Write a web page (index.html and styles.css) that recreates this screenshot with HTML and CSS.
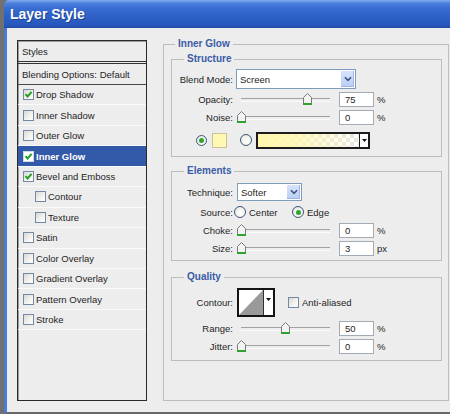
FILE: index.html
```html
<!DOCTYPE html>
<html>
<head>
<meta charset="utf-8">
<title>Layer Style</title>
<link rel="stylesheet" href="styles.css">
</head>
<body>
<div class="window">
  <div class="titlebar">Layer Style</div>
  <div class="client">
    <div class="styles">
      <div class="list-head">Styles</div>
      <div class="list-blend">Blending Options: Default</div>
      <div class="list-row"><span class="cb on"><svg viewBox="0 0 9 9"><polyline points="1.5,4.2 3.6,6.5 7.6,1.8"/></svg></span>Drop Shadow</div>
      <div class="list-row"><span class="cb"></span>Inner Shadow</div>
      <div class="list-row"><span class="cb"></span>Outer Glow</div>
      <div class="list-row selected"><span class="cb on"><svg viewBox="0 0 9 9"><polyline points="1.5,4.2 3.6,6.5 7.6,1.8"/></svg></span>Inner Glow</div>
      <div class="list-row"><span class="cb on"><svg viewBox="0 0 9 9"><polyline points="1.5,4.2 3.6,6.5 7.6,1.8"/></svg></span>Bevel and Emboss</div>
      <div class="list-row sub"><span class="cb"></span>Contour</div>
      <div class="list-row sub"><span class="cb"></span>Texture</div>
      <div class="list-row"><span class="cb"></span>Satin</div>
      <div class="list-row"><span class="cb"></span>Color Overlay</div>
      <div class="list-row"><span class="cb"></span>Gradient Overlay</div>
      <div class="list-row"><span class="cb"></span>Pattern Overlay</div>
      <div class="list-row"><span class="cb"></span>Stroke</div>
    </div>

    <fieldset class="group outer">
      <legend>Inner Glow</legend>

      <fieldset class="group structure">
        <legend>Structure</legend>
        <div class="row r-blend">
          <span class="lbl">Blend Mode:</span>
          <div class="select wide"><span class="select-text">Screen</span><span class="select-btn"><svg viewBox="0 0 9 6"><path d="M1 1 L4.5 4.5 L8 1"/></svg></span></div>
        </div>
        <div class="row r-first">
          <span class="lbl">Opacity:</span>
          <div class="slider"><div class="rail"><span class="thumb" style="left:75%"><svg viewBox="0 0 9 12"><path d="M0.5 4.5 L4.5 0.5 L8.5 4.5 V10.5 H0.5 Z"/><rect x="0" y="10" width="9" height="2"/></svg></span></div></div>
          <span class="num">75</span><span class="unit">%</span>
        </div>
        <div class="row">
          <span class="lbl">Noise:</span>
          <div class="slider"><div class="rail"><span class="thumb" style="left:0%"><svg viewBox="0 0 9 12"><path d="M0.5 4.5 L4.5 0.5 L8.5 4.5 V10.5 H0.5 Z"/><rect x="0" y="10" width="9" height="2"/></svg></span></div></div>
          <span class="num">0</span><span class="unit">%</span>
        </div>
        <div class="row r-color">
          <span class="radio on"></span>
          <span class="swatch"></span>
          <span class="radio r2"></span>
          <div class="gradient"><span class="grad-fill"></span><span class="grad-btn"><svg viewBox="0 0 5 3"><path d="M0 0 H5 L2.5 3 Z"/></svg></span></div>
        </div>
      </fieldset>

      <fieldset class="group elements">
        <legend>Elements</legend>
        <div class="row r-tech">
          <span class="lbl">Technique:</span>
          <div class="select narrow"><span class="select-text">Softer</span><span class="select-btn"><svg viewBox="0 0 9 6"><path d="M1 1 L4.5 4.5 L8 1"/></svg></span></div>
        </div>
        <div class="row r-source">
          <span class="lbl">Source:</span>
          <span class="opt first"><span class="radio"></span>Center</span>
          <span class="opt"><span class="radio on"></span>Edge</span>
        </div>
        <div class="row">
          <span class="lbl">Choke:</span>
          <div class="slider"><div class="rail"><span class="thumb" style="left:0%"><svg viewBox="0 0 9 12"><path d="M0.5 4.5 L4.5 0.5 L8.5 4.5 V10.5 H0.5 Z"/><rect x="0" y="10" width="9" height="2"/></svg></span></div></div>
          <span class="num">0</span><span class="unit">%</span>
        </div>
        <div class="row">
          <span class="lbl">Size:</span>
          <div class="slider"><div class="rail"><span class="thumb" style="left:1%"><svg viewBox="0 0 9 12"><path d="M0.5 4.5 L4.5 0.5 L8.5 4.5 V10.5 H0.5 Z"/><rect x="0" y="10" width="9" height="2"/></svg></span></div></div>
          <span class="num">3</span><span class="unit">px</span>
        </div>
      </fieldset>

      <fieldset class="group quality">
        <legend>Quality</legend>
        <div class="row r-contour">
          <span class="lbl">Contour:</span>
          <div class="contour"><span class="curve"><svg viewBox="0 0 26 25" preserveAspectRatio="none"><path d="M0 25 L26 0 V25 Z"/></svg></span><span class="contour-btn"><svg viewBox="0 0 5 3"><path d="M0 0 H5 L2.5 3 Z"/></svg></span></div>
          <span class="cb aa"></span><span class="aa-text">Anti-aliased</span>
        </div>
        <div class="row r-first">
          <span class="lbl">Range:</span>
          <div class="slider"><div class="rail"><span class="thumb" style="left:50%"><svg viewBox="0 0 9 12"><path d="M0.5 4.5 L4.5 0.5 L8.5 4.5 V10.5 H0.5 Z"/><rect x="0" y="10" width="9" height="2"/></svg></span></div></div>
          <span class="num">50</span><span class="unit">%</span>
        </div>
        <div class="row">
          <span class="lbl">Jitter:</span>
          <div class="slider"><div class="rail"><span class="thumb" style="left:0%"><svg viewBox="0 0 9 12"><path d="M0.5 4.5 L4.5 0.5 L8.5 4.5 V10.5 H0.5 Z"/><rect x="0" y="10" width="9" height="2"/></svg></span></div></div>
          <span class="num">0</span><span class="unit">%</span>
        </div>
      </fieldset>
    </fieldset>
  </div>
</div>
</body>
</html>
```

FILE: styles.css
```css
* { box-sizing: border-box; }
html, body { margin: 0; padding: 0; }
body {
  width: 450px;
  height: 414px;
  overflow: hidden;
  background: #707070;
  font-family: "Liberation Sans", Arial, sans-serif;
  font-size: 9.5px;
  color: #1e1e1e;
}
.window {
  margin-left: 4px;
  height: 414px;
  display: flex;
  flex-direction: column;
}
.titlebar {
  flex: none;
  height: 28px;
  padding-left: 6px;
  display: flex;
  align-items: center;
  color: #fff;
  font-weight: bold;
  font-size: 14px;
  border-radius: 5px 0 0 0;
  text-shadow: 1px 1px 0 #1d438f;
  background: linear-gradient(to bottom, #86aef0 0, #4d82de 3px, #3a6dd2 8px, #2f62c8 55%, #2757bc 90%, #1f4aa6 100%);
}
.client {
  flex: 1;
  display: flex;
  align-items: flex-start;
  background: #ededed;
  border-left: 3px solid #4a7bd6;
  border-bottom: 2px solid #686868;
  padding: 9px 0 0 10px;
}

/* ---------- styles list ---------- */
.styles {
  flex: none;
  width: 130px;
  height: 361px;
  margin-top: 3px;
  border: 1px solid #2a2a2a;
  box-shadow: inset 1px 1px 0 #9c9c9c;
  background: #ededed;
}
.list-head {
  height: 23px;
  padding-left: 4px;
  display: flex;
  align-items: center;
  border-bottom: 3px double #333;
}
.list-blend {
  height: 21px;
  padding-left: 4px;
  display: flex;
  align-items: center;
  border-bottom: 1px solid #4a4a4a;
}
.list-row {
  height: 20.45px;
  padding-left: 5px;
  display: flex;
  align-items: center;
  border-bottom: 1px solid #fafafa;
}
.list-row.sub { padding-left: 17px; }
.list-row.selected {
  background: #3359a9;
  color: #fff;
  font-weight: bold;
}
.cb {
  flex: none;
  width: 11px;
  height: 11px;
  margin-right: 2px;
  border: 1px solid #7389a6;
  background: linear-gradient(135deg, #d9d9d3 0%, #f3f3f0 60%, #fff 100%);
  display: flex;
  align-items: center;
  justify-content: center;
}
.cb svg { width: 9px; height: 9px; }
.cb polyline { fill: none; stroke: #22a022; stroke-width: 2; }
.selected .cb { background: #fff; border-color: #cfd8e8; }

/* ---------- groups ---------- */
fieldset.group {
  margin: 0;
  padding: 0;
  min-width: 0;
  border: 1px solid #bdbdbd;
}
fieldset.group > legend {
  margin-left: 12px;
  padding: 0 3px;
  font-weight: bold;
  font-size: 10px;
  line-height: 14px;
  color: #3a5ba6;
}
fieldset.outer {
  flex: none;
  width: 286px;
  height: 364px;
  margin-left: 16px;
  padding-top: 1px;
}
fieldset.outer > legend { margin-left: 11px; }
fieldset.structure { margin: 0 6px 0 7px; height: 105px; }
fieldset.elements { margin: 7px 6px 0 7px; height: 97px; }
fieldset.quality { margin: 9px 6px 0 7px; height: 91px; }

.row {
  display: flex;
  align-items: center;
  height: 18px;
}
.r-blend { height: 20px; margin-top: 3px; }
.r-first { margin-top: 1px; }
.r-color { margin-top: 5px; padding-left: 24px; }
.r-tech { margin-top: 5px; }
.r-source { margin-top: 2px; }
.r-contour { height: 29px; margin-top: 4px; }
.quality .r-first { margin-top: 2px; }

.lbl {
  flex: none;
  width: 61px;
  margin-right: 3px;
  text-align: right;
}

/* select */
.select {
  flex: none;
  display: flex;
  border: 1px solid #7f9db9;
  background: #fff;
}
.select.wide { width: 120px; height: 20px; }
.select.narrow { width: 65px; height: 18px; margin-left: 1px; }
.select-text {
  flex: 1;
  display: flex;
  align-items: center;
  padding-left: 3px;
}
.select-btn {
  flex: none;
  width: 15px;
  display: flex;
  align-items: center;
  justify-content: center;
  border: 1px solid #fff;
  background: linear-gradient(to bottom, #d8e4fc, #b9cdf4);
  box-shadow: inset -1px -1px 0 #9fb6e4;
}
.select-btn svg { width: 8px; height: 6px; }
.select-btn path { fill: none; stroke: #3f5480; stroke-width: 1.8; }

/* slider */
.slider {
  flex: none;
  position: relative;
  width: 98px;
  height: 18px;
  margin-left: 1px;
}
.rail {
  position: absolute;
  left: 4px;
  right: 5px;
  top: 0;
  bottom: 0;
}
.rail::before {
  content: "";
  position: absolute;
  left: 0;
  right: 0;
  top: 8px;
  height: 2px;
  border-top: 1px solid #a2a2a2;
  border-bottom: 1px solid #fbfbfb;
}
.thumb {
  position: absolute;
  top: 3px;
  width: 9px;
  height: 12px;
  margin-left: -4.5px;
}
.thumb svg { display: block; width: 9px; height: 12px; }
.thumb path { fill: #f3f3f3; stroke: #7a7a7a; stroke-width: 1; }
.thumb rect { fill: #2ea22e; }

/* numeric field */
.num {
  flex: none;
  width: 35px;
  height: 15px;
  margin-left: 4px;
  padding-left: 5px;
  display: flex;
  align-items: center;
  background: #fff;
  border: 1px solid #a3abb5;
}
.unit { margin-left: 3px; }

/* radio */
.radio {
  flex: none;
  width: 11px;
  height: 11px;
  border-radius: 50%;
  border: 1px solid #3a5677;
  background: radial-gradient(circle at 60% 60%, #fff 0, #f4f4f1 45%, #dcdcd6 100%);
  display: flex;
  align-items: center;
  justify-content: center;
}
.radio.on::after {
  content: "";
  width: 5px;
  height: 5px;
  border-radius: 50%;
  background: #2fa52f;
}
.swatch {
  flex: none;
  width: 15px;
  height: 15px;
  margin-left: 5px;
  background: #fff8b2;
  border: 1px solid #c9c29a;
}
.radio.r2 { margin-left: 13px; width: 12px; height: 12px; }
.gradient {
  flex: none;
  display: flex;
  width: 114px;
  height: 17px;
  margin-left: 4px;
  border: 2px solid #1c1c1c;
  background-color: #fff;
  background-image:
    linear-gradient(45deg, #e6e6e6 25%, transparent 25%, transparent 75%, #e6e6e6 75%),
    linear-gradient(45deg, #e6e6e6 25%, transparent 25%, transparent 75%, #e6e6e6 75%);
  background-size: 8px 8px;
  background-position: 0 0, 4px 4px;
}
.grad-fill {
  flex: 1;
  background: linear-gradient(to right, #fff7ae 0%, rgba(255, 247, 174, 0.85) 35%, rgba(255, 247, 174, 0) 100%);
}
.grad-btn {
  flex: none;
  width: 9px;
  background: #fff;
  border-left: 1px solid #1c1c1c;
  display: flex;
  align-items: center;
  justify-content: center;
}
.grad-btn svg, .contour-btn svg { width: 5px; height: 3px; }
.grad-btn path, .contour-btn path { fill: #111; }

/* source options */
.r-source .lbl { margin-right: 1px; }
.opt { display: flex; align-items: center; }
.opt.first { width: 58px; }
.opt .radio { margin-right: 3px; }
.opt .radio { width: 12px; height: 12px; }

/* contour */
.contour {
  flex: none;
  display: flex;
  width: 38px;
  height: 29px;
  margin-left: 1px;
  border: 2px solid #141414;
  background: #fff;
}
.curve { flex: 1; display: block; }
.curve svg { display: block; width: 100%; height: 100%; }
.curve path { fill: #9a9a9a; }
.contour-btn {
  flex: none;
  width: 10px;
  border-left: 1px solid #303030;
  background: #fff;
  display: flex;
  justify-content: center;
  padding-top: 8px;
}
.cb.aa { margin-left: 13px; margin-right: 3px; }
```
